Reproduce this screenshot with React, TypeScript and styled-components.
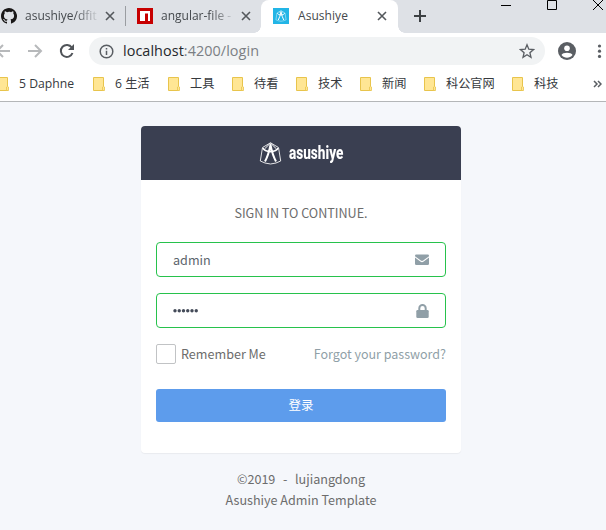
import React from 'react';
import styled, { createGlobalStyle } from 'styled-components';

const GlobalStyle = createGlobalStyle`
  * { box-sizing: border-box; }
  html, body { margin: 0; padding: 0; overflow: hidden; }
  svg { display: block; flex: none; }
`;

const pageFont = '"Noto Sans CJK SC", "Source Sans Pro", sans-serif';
const chromeFont = '"Open Sans", "Noto Sans CJK SC", sans-serif';

const Window = styled.div`
  display: flex;
  flex-direction: column;
  width: 606px;
  height: 530px;
  overflow: hidden;
  background: #f5f7fb;
  font-family: ${chromeFont};
`;

const TabStrip = styled.div`
  display: flex;
  height: 33px;
  background: #dee1e6;
`;

const Tab = styled.div<{ $width: number; $active?: boolean; $pad: number; $end: number }>`
  position: relative;
  display: flex;
  align-items: center;
  width: ${p => p.$width}px;
  height: 33px;
  padding: 0 ${p => p.$end}px 1px ${p => p.$pad}px;
  background: ${p => (p.$active ? '#fff' : 'transparent')};
  border-radius: 8px 8px 0 0;
  ${p => p.$active && `
    &::before, &::after {
      content: '';
      position: absolute;
      bottom: 0;
      width: 7px;
      height: 7px;
    }
    &::before { left: -7px; background: radial-gradient(circle at 0 0, transparent 6.5px, #fff 7px); }
    &::after { right: -7px; background: radial-gradient(circle at 100% 0, transparent 6.5px, #fff 7px); }
  `}
`;

const TabTitle = styled.span<{ $space: number; $fade?: boolean }>`
  flex: 1;
  min-width: 0;
  margin-left: ${p => (p.$fade ? 8 : 9)}px;
  overflow: hidden;
  white-space: nowrap;
  font-size: 12px;
  line-height: 20px;
  letter-spacing: ${p => p.$space}px;
  color: #45494d;
  ${p => p.$fade && 'mask-image: linear-gradient(to right, #000 62%, transparent 94%);'}
`;

const Divider = styled.div`
  width: 1px;
  height: 20px;
  margin-top: 6px;
  background: #9a9da1;
`;

const NewTab = styled.div`
  display: flex;
  justify-content: center;
  width: 44px;
  padding-top: 9px;
`;

const WindowButtons = styled.div`
  display: flex;
  gap: 35px;
  margin-left: 59px;
`;

const Toolbar = styled.div`
  display: flex;
  align-items: center;
  height: 36px;
  background: #fff;
`;

const NavIcons = styled.div`
  display: flex;
  align-items: center;
  width: 89px;
  margin-left: -8px;
  gap: 13px;
  flex: none;
`;

const AddressBar = styled.div`
  display: flex;
  align-items: center;
  width: 456px;
  height: 28px;
  margin-left: 8px;
  padding: 0 10px;
  border-radius: 14px;
  background: #f1f3f4;
`;

const Url = styled.span`
  flex: 1;
  margin-left: 9px;
  font-size: 14.4px;
  line-height: 24px;
  letter-spacing: 0.06px;
  color: #7b7f84;
  b { font-weight: 400; color: #25282c; }
`;

const ToolbarEnd = styled.div`
  display: flex;
  align-items: center;
  gap: 15px;
  margin-left: 12px;
`;

const Bookmarks = styled.div`
  display: flex;
  align-items: center;
  height: 33px;
  padding-bottom: 3px;
  background: #fff;
  border-bottom: 1px solid #b4b6b8;
`;

const Bookmark = styled.div<{ $width: number }>`
  display: flex;
  align-items: center;
  flex: none;
  width: ${p => p.$width}px;
  gap: 10px;
  white-space: nowrap;
  font-size: 12.2px;
  line-height: 18px;
  color: #36393d;
  &:first-child { margin-left: -3px; }
`;

const Page = styled.main`
  display: flex;
  flex-direction: column;
  align-items: center;
  flex: 1;
  width: 602px;
  padding-top: 24px;
  font-family: ${pageFont};
  font-size: 12.6px;
  color: #6c6c6c;
`;

const Card = styled.section`
  width: 320px;
  height: 327px;
  border-radius: 4px;
  overflow: hidden;
  background: #fff;
  box-shadow: 0 1px 1px rgba(0, 0, 0, 0.05);
`;

const CardHeader = styled.header`
  display: flex;
  align-items: center;
  height: 54px;
  padding-left: 118px;
  gap: 7px;
  background: #3a3f51;
`;

const Brand = styled.span`
  width: 75px;
  transform: scaleX(0.755);
  transform-origin: left;
  font-family: Roboto, sans-serif;
  font-size: 18px;
  font-weight: 800;
  line-height: 22px;
  color: #fff;
`;

const Form = styled.div`
  display: flex;
  flex-direction: column;
  padding: 0 15px;
`;

const Prompt = styled.div`
  height: 62px;
  padding-top: 22px;
  text-align: center;
  line-height: 21px;
`;

const Field = styled.div`
  display: flex;
  align-items: center;
  justify-content: space-between;
  height: 35px;
  margin-bottom: 16px;
  padding: 0 16px;
  border: 1px solid #27c24c;
  border-radius: 4px;
  line-height: 21px;
  color: #5c646c;
`;

const Options = styled.div`
  display: flex;
  align-items: center;
  height: 20px;
  line-height: 20px;
`;

const Checkbox = styled.span`
  width: 20px;
  height: 20px;
  margin-right: 5px;
  border: 1px solid #c1c3c5;
  border-radius: 2px;
`;

const Forgot = styled.a`
  margin-left: auto;
  font-size: 12.5px;
  color: #909fa7;
`;

const Submit = styled.button`
  height: 33px;
  margin-top: 25px;
  padding: 0 0 2px;
  border: 0;
  border-radius: 3px;
  background: #5d9cec;
  color: #fff;
  font: 400 12.5px ${pageFont};
`;

const Footer = styled.footer`
  padding-top: 15px;
  text-align: center;
  line-height: 21px;
  white-space: pre;
`;

const Copyright = styled.div`
  word-spacing: 1px;
`;

const Close = () => (
  <svg width="10" height="10" viewBox="0 0 10 10" stroke="#54585c" strokeWidth="1.6">
    <path d="M1 1l8 8M9 1L1 9" />
  </svg>
);

const GithubIcon = () => (
  <svg width="16" height="16" viewBox="0 0 16 16" fill="#191717">
    <path d="M8 0C3.58 0 0 3.58 0 8c0 3.54 2.29 6.53 5.47 7.59.4.07.55-.17.55-.38 0-.19-.01-.82-.01-1.49-2.01.37-2.53-.49-2.69-.94-.09-.23-.48-.94-.82-1.13-.28-.15-.68-.52-.01-.53.63-.01 1.08.58 1.23.82.72 1.21 1.87.87 2.33.66.07-.52.28-.87.51-1.07-1.78-.2-3.64-.89-3.64-3.95 0-.87.31-1.59.82-2.15-.08-.2-.36-1.02.08-2.12 0 0 .67-.21 2.2.82A7.5 7.5 0 0 1 8 3.87c.68 0 1.36.09 2 .26 1.53-1.04 2.2-.82 2.2-.82.44 1.1.16 1.92.08 2.12.51.56.82 1.27.82 2.15 0 3.07-1.87 3.75-3.65 3.95.29.25.54.73.54 1.48 0 1.07-.01 1.93-.01 2.2 0 .21.15.46.55.38A8 8 0 0 0 8 0z" />
  </svg>
);

const NpmIcon = () => (
  <svg width="16" height="16" viewBox="0 0 16 16">
    <path fill="#c70000" d="M0 0h16v16H0z" />
    <path fill="#fff" d="M3 3h10v10h-2V5.500H8V13H3z" />
  </svg>
);

const GemLines = () => (
  <g fill="none" stroke="#fff" strokeLinejoin="round">
    <path strokeWidth="1" strokeOpacity=".85" d="M11 .8L3 5.500 .8 19l4.700 2 5.500 1 5.500-1 4.700-2L19 5.500z" />
    <path strokeWidth="1.800" d="M3.500 6Q5 9.500 11 9.500T18.500 6" />
    <path strokeWidth="2" d="M5.500 19.500Q9 13 11 3q2 10 5.500 16.500" />
    <path strokeWidth="1.200" d="M11 1L5.500 6.500M11 1l5.500 5.500" strokeOpacity=".6" />
  </g>
);

const AppIcon = () => (
  <svg width="16" height="16" viewBox="0 0 32 32">
    <path fill="#22b5e6" d="M0 0h32v32H0z" />
    <g transform="translate(5 4.500)"><GemLines /></g>
  </svg>
);

const Folder = () => (
  <svg width="12" height="14" viewBox="0 0 12 14">
    <path d="M.5.500h10V13.500H.5z" fill="#ffe694" stroke="#e8c44c" />
    <path d="M9.500 13.500V10l1-.8 1 .8v3.500z" fill="#ffe694" stroke="#e8c44c" strokeWidth=".8" />
  </svg>
);

const PasswordDots = () => (
  <svg width="27" height="5" viewBox="0 0 27 5" fill="#444b59">
    {[0, 1, 2, 3, 4, 5].map(i => (
      <circle key={i} cx={2 + i * 4.25} cy="2.800" r="1.700" />
    ))}
  </svg>
);

const bookmarks = [
  { name: '5 Daphne', width: 96 },
  { name: '6 生活', width: 75 },
  { name: '工具', width: 64 },
  { name: '待看', width: 64 },
  { name: '技术', width: 64 },
  { name: '新闻', width: 64 },
  { name: '科公官网', width: 88 },
  { name: '科技', width: 81 },
];

export default function App() {
  return (
    <Window>
      <GlobalStyle />
      <TabStrip>
        <Tab $width={125} $pad={1} $end={10}>
          <GithubIcon />
          <TabTitle $space={0} $fade>asushiye/dfit</TabTitle>
          <Close />
        </Tab>
        <Divider />
        <Tab $width={135} $pad={11} $end={10}>
          <NpmIcon />
          <TabTitle $space={0} $fade>angular-file -</TabTitle>
          <Close />
        </Tab>
        <Tab $width={137} $pad={12} $end={11} $active>
          <AppIcon />
          <TabTitle $space={0.05}>Asushiye</TabTitle>
          <Close />
        </Tab>
        <NewTab>
          <svg width="14" height="14" stroke="#3c4043" strokeWidth="2"><path d="M7 1v12M1 7h12" /></svg>
        </NewTab>
        <WindowButtons>
          <svg width="11" height="12" stroke="#000"><path d="M0 5.500h10" /></svg>
          <svg width="11" height="12" stroke="#000" fill="none"><path d="M.5.500h9v9h-9z" /></svg>
          <svg width="11" height="12" stroke="#000"><path d="M0 0l10 10M10 0L0 10" /></svg>
        </WindowButtons>
      </TabStrip>
      <Toolbar>
        <NavIcons>
          <svg width="20" height="16" fill="none" stroke="#b7b9bb" strokeWidth="2"><path d="M18 8H5M11 2L5 8l6 6" /></svg>
          <svg width="20" height="16" fill="none" stroke="#b7b9bb" strokeWidth="2"><path d="M3 8h13M10 2l6 6-6 6" /></svg>
          <svg width="17" height="16" fill="none" stroke="#505459" strokeWidth="2">
            <path d="M13.800 4.500A6 6 0 1 0 14.500 10" /><path d="M16 1v6h-6z" fill="#505459" stroke="none" />
          </svg>
        </NavIcons>
        <AddressBar>
          <svg width="15" height="15" fill="none" stroke="#5a5e63" strokeWidth="1.500">
            <circle cx="7.500" cy="7.500" r="6.300" /><path d="M7.500 6.800V11M7.500 4v1.500" />
          </svg>
          <Url><b>localhost</b>:4200/login</Url>
          <svg width="16" height="16" fill="none" stroke="#5a5e63" strokeWidth="1.300">
            <path d="M8 1.800l1.800 4.400 4.700.4-3.600 3.100 1.100 4.600L8 11.800l-4 2.500 1.100-4.600-3.600-3.100 4.700-.4z" />
          </svg>
        </AddressBar>
        <ToolbarEnd>
          <svg width="20" height="20" viewBox="0 0 20 20">
            <circle cx="10" cy="10" r="9" fill="#5a5e63" />
            <circle cx="10" cy="7.300" r="2.800" fill="#fff" />
            <path fill="#fff" d="M4.500 14c1-3 10-3 11 0-2.800 3.700-8.200 3.700-11 0z" />
          </svg>
          <svg width="14" height="16" fill="#5a5e63">
            <circle cx="7.500" cy="3" r="1.600" /><circle cx="7.500" cy="8.200" r="1.600" /><circle cx="7.500" cy="13.400" r="1.600" />
          </svg>
        </ToolbarEnd>
      </Toolbar>
      <Bookmarks>
        {bookmarks.map(b => (
          <Bookmark key={b.name} $width={b.width}><Folder />{b.name}</Bookmark>
        ))}
        <svg width="9" height="8" fill="none" stroke="#5a5e63" strokeWidth="1.500"><path d="M1 1l3 3-3 3M5 1l3 3-3 3" /></svg>
      </Bookmarks>
      <Page>
        <Card>
          <CardHeader>
            <svg width="23" height="23" viewBox="0 0 22 23"><GemLines /></svg>
            <Brand>asushiye</Brand>
          </CardHeader>
          <Form>
            <Prompt>SIGN IN TO CONTINUE.</Prompt>
            <Field>
              admin
              <svg width="14" height="12" viewBox="0 0 14 12" fill="#909fa7">
                <path d="M1.300.500h11.400Q14 .5 14 1.700v.5L8.200 6.600Q7 7.500 5.800 6.600L0 2.200v-.5Q0 .5 1.300.500z" />
                <path d="M0 3.600l5.300 4Q7 8.800 8.700 7.600l5.300-4v6.200q0 1.200-1.300 1.200H1.300Q0 11 0 9.800z" />
              </svg>
            </Field>
            <Field>
              <PasswordDots />
              <svg width="13" height="14" viewBox="0 0 13 14">
                <path d="M3.300 7V4.300a3.200 3.200 0 0 1 6.400 0V7" fill="none" stroke="#909fa7" strokeWidth="2" />
                <rect x="0.300" y="6" width="12.400" height="8" rx="1.300" fill="#909fa7" />
              </svg>
            </Field>
            <Options><Checkbox />Remember Me<Forgot>Forgot your password?</Forgot></Options>
            <Submit>登录</Submit>
          </Form>
        </Card>
        <Footer>
          <Copyright>{'©2019  -  lujiangdong'}</Copyright>
          <div>Asushiye Admin Template</div>
        </Footer>
      </Page>
    </Window>
  );
}
